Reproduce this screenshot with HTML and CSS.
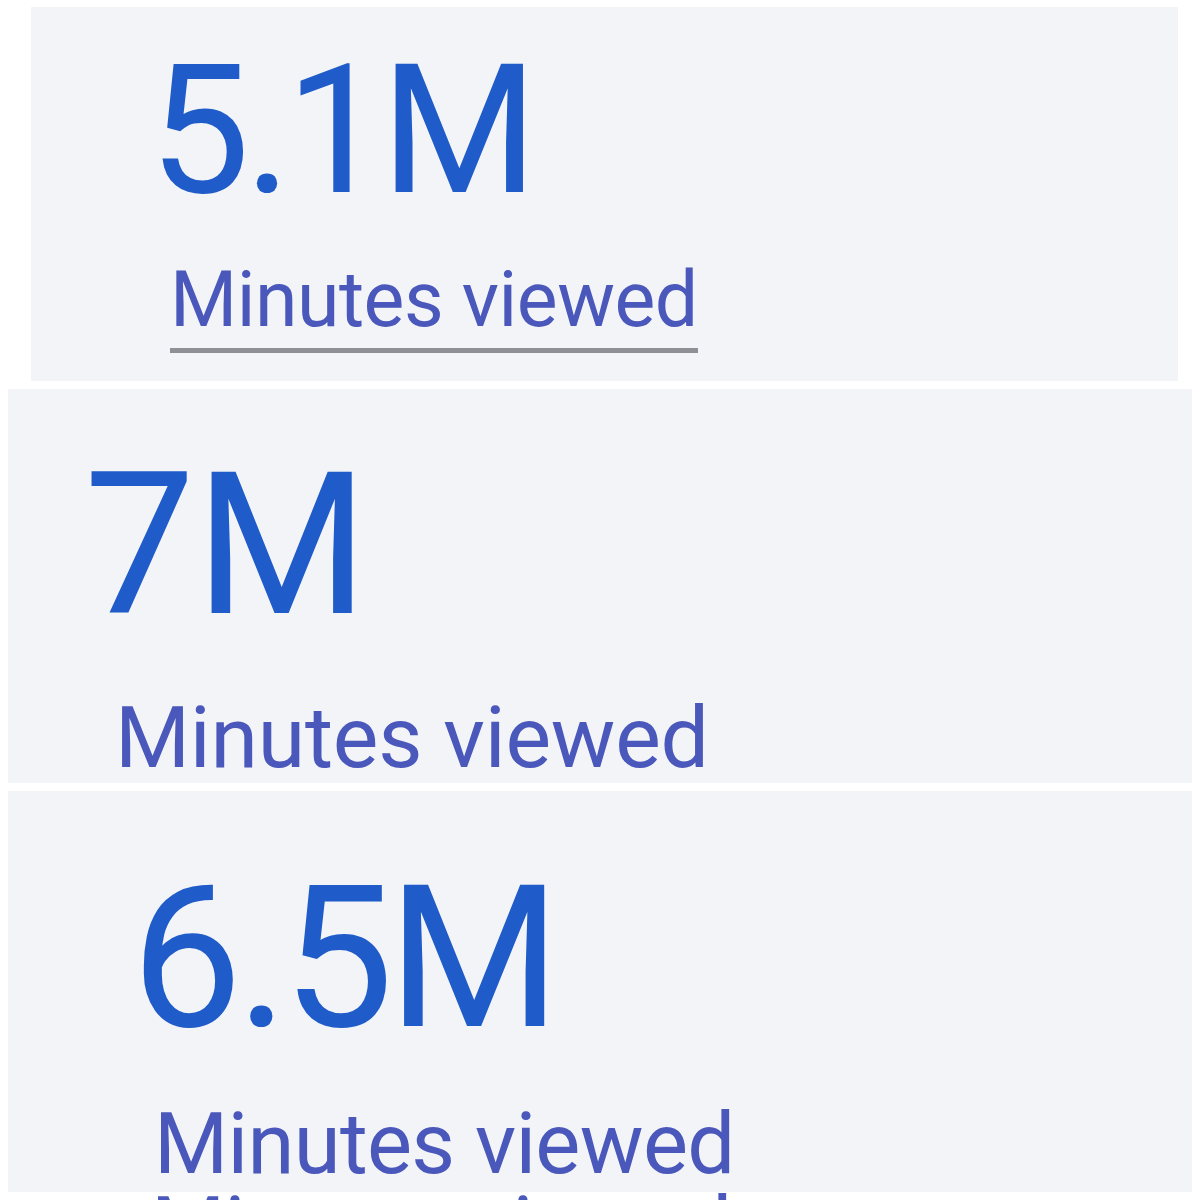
FILE: index.html
```html
<!DOCTYPE html>
<html lang="en">
<head>
    <meta charset="UTF-8">
    <meta name="viewport" content="width=device-width, initial-scale=1.0">
    <title>Minutes viewed</title>
    <link rel="stylesheet" href="styles.css">
</head>
<body>
    <div class="stack">
        <div class="card card-first">
            <div class="value">5.1M</div>
            <div class="label"><span class="label-link">Minutes viewed</span></div>
        </div>

        <div class="card card-second">
            <div class="value">7M</div>
            <div class="label">Minutes viewed</div>
        </div>

        <div class="card card-third">
            <div class="value">6.5M</div>
            <div class="label">Minutes viewed</div>
        </div>

        <div class="card card-cut">
            <div class="label">Minutes viewed</div>
        </div>
    </div>
</body>
</html>
```

FILE: styles.css
```css
body {
    font-family: Roboto, "Liberation Sans", sans-serif;
    margin: 0;
    padding: 0;
    background-color: #ffffff;
    overflow: hidden;
}
.stack {
    display: flex;
    flex-direction: column;
    gap: 8px;
    padding-top: 7px;
    height: 1193px;
    overflow: hidden;
}
.card {
    background: #f3f4f7;
    box-sizing: border-box;
    overflow: hidden;
    flex-shrink: 0;
}
.value {
    color: #1f5bc9;
    line-height: 1;
    font-weight: 400;
}
.label {
    color: #4a57bb;
    line-height: 1;
    white-space: nowrap;
}

/* first panel */
.card-first {
    margin-left: 31px;
    width: 1147px;
    height: 374px;
    padding-top: 34px;
}
.card-first .value {
    font-size: 180px;
    letter-spacing: -6px;
    margin-left: 118px;
}
.card-first .label {
    font-size: 77px;
    letter-spacing: -0.5px;
    margin-top: 41px;
    margin-left: 139px;
}
.label-link {
    display: inline-block;
    padding-bottom: 9px;
    border-bottom: 5px solid #8f9095;
}

/* second panel */
.card-second {
    margin-left: 8px;
    width: 1184px;
    height: 394px;
    padding-top: 57px;
}
.card-second .value {
    font-size: 198px;
    margin-left: 76px;
}
.card-second .label {
    font-size: 86px;
    letter-spacing: -0.25px;
    margin-top: 51px;
    margin-left: 107px;
}

/* third panel */
.card-third {
    margin-left: 8px;
    width: 1184px;
    height: 401px;
    padding-top: 68px;
}
.card-third .value {
    font-size: 198px;
    letter-spacing: -6px;
    margin-left: 123px;
}
.card-third .label {
    font-size: 85px;
    letter-spacing: -0.7px;
    margin-top: 45px;
    margin-left: 146px;
}

/* next panel, cut off by the bottom edge */
.card-cut {
    margin-top: -8px;
    margin-left: 8px;
    width: 1184px;
    height: 40px;
    background: #ffffff;
}
.card-cut .label {
    font-size: 85px;
    letter-spacing: -0.7px;
    line-height: 0.86;
    margin-left: 143px;
}
```
